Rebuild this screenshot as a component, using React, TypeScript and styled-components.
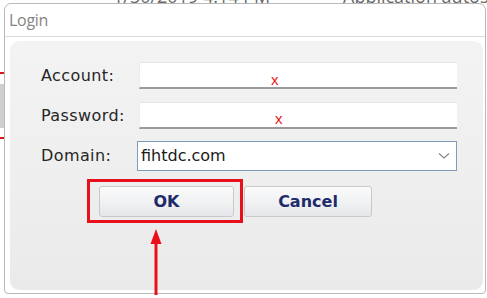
import React from 'react';
import styled, { createGlobalStyle } from 'styled-components';

const GlobalStyle = createGlobalStyle`
    html, body {
        margin: 0;
        padding: 0;
        background: #ffffff;
        overflow: hidden;
    }
`;

const Desktop = styled.div`
    position: relative;
    width: 487px;
    height: 298px;
    overflow: hidden;
    background: #ffffff;
    font-family: 'DejaVu Sans', Verdana, sans-serif;
`;

const BackText = styled.span<{ $left: number }>`
    position: absolute;
    top: -16px;
    left: ${(p) => p.$left}px;
    font-family: 'Open Sans', sans-serif;
    font-size: 18px;
    color: #6a6a6a;
    white-space: nowrap;
`;

const EdgeStrip = styled.div`
    position: absolute;
    left: 0;
    top: 60px;
    width: 4px;
    height: 110px;
    display: flex;
    flex-direction: column;
`;

const EdgeMark = styled.div<{ $h: number; $c: string }>`
    height: ${(p) => p.$h}px;
    background: ${(p) => p.$c};
`;

const Window = styled.div`
    position: absolute;
    left: 4px;
    top: 3px;
    width: 482px;
    height: 291px;
    display: flex;
    flex-direction: column;
    background: #ffffff;
    border: 1px solid #b9b9b9;
    border-radius: 7px 7px 4px 4px;
    box-sizing: border-box;
`;

const TitleBar = styled.div`
    height: 32px;
    display: flex;
    align-items: center;
    padding-left: 4px;
    border-bottom: 1px solid #dadada;
    font-family: 'Open Sans', sans-serif;
    font-size: 16px;
    color: #858585;
    letter-spacing: -0.3px;
`;

const Panel = styled.div`
    flex: 1;
    margin: 4px 2px 3px 5px;
    border-radius: 9px;
    background: linear-gradient(180deg, #f3f3f3 0%, #eeeeee 60%, #eaeaea 100%);
    padding: 21px 26px 0 31px;
    display: flex;
    flex-direction: column;
`;

const Form = styled.div`
    display: grid;
    grid-template-columns: 98px 318px;
    grid-template-rows: 27px 28px 29px;
    row-gap: 12px;
    align-items: center;
`;

const Label = styled.div`
    font-size: 16px;
    letter-spacing: 0.4px;
    color: #262626;
`;

const TextBox = styled.div<{ $markOffset: number }>`
    height: 27px;
    box-sizing: border-box;
    background: #ffffff;
    border-top: 1px solid #e6e6e6;
    border-bottom: 2px solid #9a9a9a;
    border-left: 1px solid #ececec;
    display: flex;
    align-items: center;
    padding-left: ${(p) => p.$markOffset}px;
    padding-top: 8px;
`;

const Mark = styled.span`
    font-family: 'Liberation Sans', Arial, sans-serif;
    font-size: 15px;
    color: #e2191e;
    line-height: 1;
`;

const Select = styled.div`
    height: 30px;
    margin-left: -2px;
    box-sizing: border-box;
    background: #ffffff;
    border: 1px solid #7f9cba;
    display: flex;
    align-items: center;
    justify-content: space-between;
    padding: 0 6px 0 3px;
    font-size: 16px;
    color: #1a1a1a;
`;

const ButtonRow = styled.div`
    display: flex;
    gap: 10px;
    margin: 16px 0 0 58px;
`;

const Button = styled.div<{ $w: number }>`
    width: ${(p) => p.$w}px;
    height: 31px;
    box-sizing: border-box;
    border: 1px solid #c9c9c9;
    border-radius: 3px;
    background: linear-gradient(180deg, #fbfbfb 0%, #f1f2f4 50%, #e6e7ea 100%);
    display: flex;
    align-items: center;
    justify-content: center;
    font-weight: bold;
    font-size: 16px;
    color: #1f2a6a;
`;

const Highlight = styled.div`
    position: absolute;
    left: 87px;
    top: 179px;
    width: 156px;
    height: 44px;
    box-sizing: border-box;
    border: 3px solid #e8101a;
`;

const Arrow = styled.svg`
    position: absolute;
    left: 149px;
    top: 229px;
`;

const Chevron = () => (
    <svg width="12" height="8" viewBox="0 0 12 8">
        <path d="M1 1.5 L6 6 L11 1.5" fill="none" stroke="#8a8a8a" strokeWidth="1.3" />
    </svg>
);

const App: React.FC = () => (
    <Desktop>
        <GlobalStyle />
        <BackText $left={113}>1/30/2019 4:14 PM</BackText>
        <BackText $left={343}>Application autosave</BackText>
        <EdgeStrip>
            <EdgeMark $h={12} $c="#ffffff" />
            <EdgeMark $h={2} $c="#e0141b" />
            <EdgeMark $h={10} $c="#ffffff" />
            <EdgeMark $h={44} $c="#cfcfcf" />
            <EdgeMark $h={9} $c="#ffffff" />
            <EdgeMark $h={2} $c="#e0141b" />
        </EdgeStrip>
        <Window>
            <TitleBar>Login</TitleBar>
            <Panel>
                <Form>
                    <Label>Account:</Label>
                    <TextBox $markOffset={131}>
                        <Mark>x</Mark>
                    </TextBox>
                    <Label>Password:</Label>
                    <TextBox $markOffset={135}>
                        <Mark>x</Mark>
                    </TextBox>
                    <Label>Domain:</Label>
                    <Select>
                        <span>fihtdc.com</span>
                        <Chevron />
                    </Select>
                </Form>
                <ButtonRow>
                    <Button $w={135}>OK</Button>
                    <Button $w={128}>Cancel</Button>
                </ButtonRow>
            </Panel>
        </Window>
        <Highlight />
        <Arrow width="14" height="66" viewBox="0 0 14 66">
            <path d="M7 0 L12.5 15 L1.5 15 Z" fill="#e8101a" />
            <rect x="5.5" y="13" width="3" height="53" fill="#e8101a" />
        </Arrow>
    </Desktop>
);

export default App;
